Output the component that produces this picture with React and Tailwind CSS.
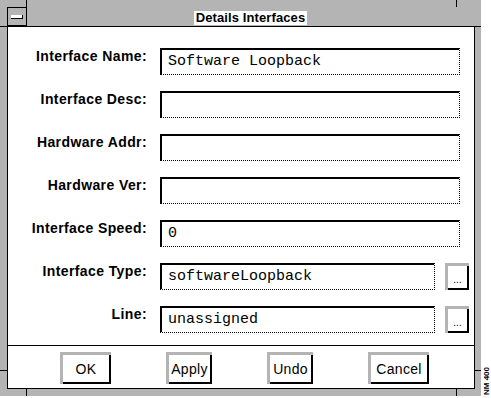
import React from 'react'

// 50% dither of the mono display, flattened to a gray
const DITHER = 'bg-[#b4b4b4]'

const rows = [
    { label: 'Interface Name:', value: 'Software Loopback' },
    { label: 'Interface Desc:', value: '' },
    { label: 'Hardware Addr:', value: '' },
    { label: 'Hardware Ver:', value: '' },
    { label: 'Interface Speed:', value: '0' },
    { label: 'Interface Type:', value: 'softwareLoopback', picker: true },
    { label: 'Line:', value: 'unassigned', picker: true },
]

const buttons = [
    { text: 'OK', w: 'w-[51px]' },
    { text: 'Apply', w: 'w-[46px]' },
    { text: 'Undo', w: 'w-[46px]' },
    { text: 'Cancel', w: 'w-[61px]' },
]

const Field = ({ value, width }) => (
    <div className={`${width} h-[27px] bg-white border-t-2 border-l-2 border-r border-b border-black [border-right-style:dotted] [border-bottom-style:dotted] pl-[6px] font-['Liberation_Mono',monospace] text-[15px] leading-[24px] text-black whitespace-pre`}>
        {value}
    </div>
)

// motif style raised button: dithered top/left, black bottom/right
const RaisedButton = ({ className, children }) => (
    <div className={`${className} ${DITHER} pt-[3px] pl-[3px]`}>
        <div className="w-full h-full bg-white border-r-2 border-b-2 border-black flex items-center justify-center">
            {children}
        </div>
    </div>
)

const Row = ({ label, value, picker }) => (
    <div className="flex items-start">
        <div className="w-[140px] pr-[1px] text-right text-[14px] font-bold leading-[16px] tracking-[0.4px] text-black">
            {label}
        </div>
        <div className="ml-[12px] flex items-start">
            <Field value={value} width={picker ? 'w-[275px]' : 'w-[300px]'} />
            {picker && (
                <RaisedButton className="ml-[10px] w-[24px] h-[27px]">
                    <span className="text-[10px] leading-none mt-[6px]">...</span>
                </RaisedButton>
            )}
        </div>
    </div>
)

const App = () => {
    return (
        <div className="w-[491px] h-[398px] bg-white flex items-start font-['Liberation_Sans',Arial,sans-serif] text-black">
            <div className={`relative w-[481px] h-[396px] flex flex-col ${DITHER}`}>
                {/* title bar */}
                <div className="h-[26px] pt-[7px] pl-[7px] pr-[7px] flex items-start">
                    <div className="w-[20px] h-[19px] border border-black flex items-center justify-center">
                        <div className="w-[12px] h-[4px] bg-white border-r border-b border-black"></div>
                    </div>
                    <div className="flex-1 flex justify-center pt-[4px]">
                        <span className="bg-white px-[2px] text-[13px] font-bold leading-[14px] tracking-[0.1px]">
                            Details Interfaces
                        </span>
                    </div>
                </div>

                {/* body */}
                <div className="ml-[7px] mr-[6px] mb-[7px] flex-1 bg-white border border-black flex flex-col">
                    <div className="flex-1 pt-[21px] flex flex-col gap-[16px]">
                        {rows.map((r) => (
                            <Row key={r.label} {...r} />
                        ))}
                    </div>
                    <div className="h-[43px] border-t border-black pt-[6px] pl-[52px] flex items-start gap-[55px]">
                        {buttons.map((b) => (
                            <RaisedButton key={b.text} className={`${b.w} h-[32px]`}>
                                <span className="text-[14px] leading-none tracking-[0.3px]">{b.text}</span>
                            </RaisedButton>
                        ))}
                    </div>
                </div>

                {/* resize handle ticks */}
                <div className="absolute left-[26px] top-0 w-px h-[7px] bg-black"></div>
                <div className="absolute left-[456px] top-0 w-px h-[7px] bg-black"></div>
                <div className="absolute left-[26px] bottom-0 w-px h-[7px] bg-black"></div>
                <div className="absolute left-[456px] bottom-0 w-px h-[7px] bg-black"></div>
                <div className="absolute left-0 top-[26px] w-[7px] h-px bg-black"></div>
                <div className="absolute right-0 top-[26px] w-[6px] h-px bg-black"></div>
                <div className="absolute left-0 top-[370px] w-[7px] h-px bg-black"></div>
                <div className="absolute right-0 top-[370px] w-[6px] h-px bg-black"></div>
            </div>
            <div className="self-end mb-[3px] ml-[1px] [writing-mode:vertical-rl] rotate-180 text-[8px] font-bold leading-[9px]">
                NM 400
            </div>
        </div>
    )
}

export default App
